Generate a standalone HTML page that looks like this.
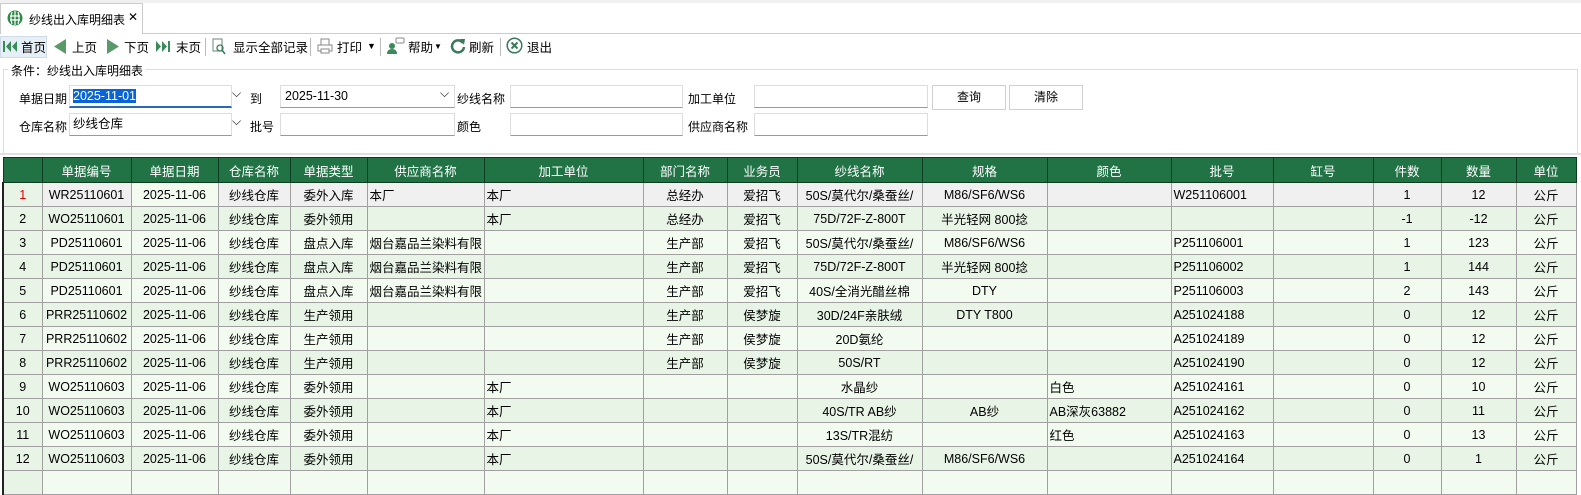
<!DOCTYPE html>
<html><head><meta charset="utf-8"><style>
*{box-sizing:border-box;margin:0;padding:0}
body{width:1581px;height:473px;overflow:hidden;background:#fff;font-family:"Liberation Sans","Noto Sans CJK SC",sans-serif;font-size:12px;color:#000;position:relative}
.a{position:absolute}
.tab{left:0;top:3px;width:143px;height:31px;border:1px solid #ccc;border-bottom:none;background:#fff}
.tb span{position:absolute;top:37px;font-size:12.5px}
.inp{position:absolute;height:23px;border:1px solid #ddd;border-bottom:1px solid #999;background:#fff;font-size:12.5px;line-height:21px;padding-left:3px}
.lbl{position:absolute;font-size:12px}
.btn{position:absolute;height:25px;border:1px solid #d0d0d0;background:#fff;text-align:center;line-height:23px;font-size:12px}
table{position:absolute;left:2px;top:157px;width:1573px;border-collapse:collapse;table-layout:fixed}
td,th{border:1px solid #a0a0a0;height:24px;font-size:12.5px;white-space:nowrap;overflow:hidden;padding:0 2px;text-align:center;font-weight:normal}
th{background:#217346;color:#fff;border-color:#0d3d20;height:25px}
tr.r1 td{background:#f0f0f0}
tr.o td{background:#f3fbf1}
tr.e td{background:#e8f5e6}
td.n{background:#e8f5e6!important;border-left:2px solid #222}
td.l{text-align:left}
</style></head><body>
<div class="a" style="left:0;top:0;width:1581px;height:3px;background:#f0f0f0"></div>
<div class="a" style="left:0;top:33px;width:1581px;height:1px;background:#ccc"></div>
<div class="a tab"></div>
<svg class="a" style="left:7px;top:10px" width="16" height="16"><circle cx="8" cy="8" r="7.5" fill="#2f8a4a"/><path d="M3 6h10M3 10h10M8 1v14M5 2q-2 6 0 12M11 2q2 6 0 12" stroke="#fff" stroke-width="1.2" fill="none"/></svg>
<div class="a" style="left:29px;top:11px;font-size:12px">纱线出入库明细表</div>
<div class="a" style="left:128px;top:10px;font-size:12px">✕</div>
<div class="tb">
<div class="a" style="left:0;top:36px;width:47px;height:22px;background:#e6eef6;border:1px solid #cfdbe8"></div>
<svg class="a" style="left:3px;top:40px" width="14" height="13"><rect x="0" y="1" width="2" height="11" fill="#3a8a5a"/><path d="M8 1L3 6.5 8 12zM14 1L9 6.5 14 12z" fill="#3a8a5a"/></svg><span style="left:21px">首页</span>
<svg class="a" style="left:53px;top:39px" width="14" height="15"><path d="M13 0L1 7.5 13 15z" fill="#5a9a6a"/></svg><span style="left:72px">上页</span>
<svg class="a" style="left:106px;top:39px" width="14" height="15"><path d="M1 0L13 7.5 1 15z" fill="#5a9a6a"/></svg><span style="left:124px">下页</span>
<svg class="a" style="left:156px;top:40px" width="14" height="13"><path d="M0 1L5 6.5 0 12zM6 1L11 6.5 6 12z" fill="#3a8a5a"/><rect x="12" y="1" width="2" height="11" fill="#3a8a5a"/></svg><span style="left:176px">末页</span>
<div class="a" style="left:205px;top:38px;width:1px;height:18px;background:#bbb"></div>
<svg class="a" style="left:212px;top:38px" width="14" height="17"><rect x="1" y="1" width="9" height="12" fill="none" stroke="#6a8a7a"/><circle cx="8" cy="10" r="3" fill="none" stroke="#3a7a5a" stroke-width="1.3"/><path d="M10 12l3 4" stroke="#3a7a5a" stroke-width="1.5"/></svg><span style="left:233px">显示全部记录</span>
<div class="a" style="left:310px;top:38px;width:1px;height:18px;background:#bbb"></div>
<svg class="a" style="left:317px;top:38px" width="16" height="16"><rect x="4" y="1" width="8" height="6" fill="none" stroke="#888"/><rect x="1" y="7" width="14" height="6" fill="none" stroke="#888"/><rect x="4" y="11" width="8" height="4" fill="#fff" stroke="#888"/></svg><span style="left:337px">打印</span><span style="left:367px;font-size:9px;top:41px">▼</span>
<div class="a" style="left:380px;top:38px;width:1px;height:18px;background:#bbb"></div>
<svg class="a" style="left:387px;top:37px" width="18" height="17"><circle cx="5" cy="9" r="3" fill="#3a8a5a"/><path d="M0 17q0-5 5-5t5 5z" fill="#3a8a5a"/><rect x="9" y="1" width="8" height="5" rx="1" fill="none" stroke="#888"/></svg><span style="left:408px">帮助</span><span style="left:434px;font-size:8px;top:42px">▼</span>
<svg class="a" style="left:450px;top:38px" width="16" height="16"><path d="M13 5A6 6 0 1 0 14 9" fill="none" stroke="#3a7a5a" stroke-width="2.5"/><path d="M10 1l5 0-1 6z" fill="#3a7a5a"/></svg><span style="left:469px">刷新</span>
<div class="a" style="left:500px;top:38px;width:1px;height:18px;background:#bbb"></div>
<svg class="a" style="left:506px;top:37px" width="17" height="17"><circle cx="8.5" cy="8.5" r="7.3" fill="none" stroke="#3a7a5a" stroke-width="1.5"/><path d="M5.5 5.5l6 6M11.5 5.5l-6 6" stroke="#3a7a5a" stroke-width="2"/></svg><span style="left:527px">退出</span>
</div>
<div class="a" style="left:3px;top:69px;width:1575px;height:86px;border:1px solid #ddd;border-bottom:none"></div>
<div class="a" style="left:8px;top:62px;padding:0 3px;background:#fff">条件：纱线出入库明细表</div>
<div class="lbl" style="left:19px;top:90px">单据日期</div>
<div class="inp" style="left:69px;top:85px;width:163px;border-bottom:2px solid #2a6ab0"><span style="background:#0a64d6;color:#fff">2025-11-01</span></div>
<div class="a" style="left:232px;top:86px">⌵</div>
<div class="lbl" style="left:250px;top:90px">到</div>
<div class="inp" style="left:280px;top:85px;width:175px;padding-left:4px">2025-11-30</div>
<div class="a" style="left:440px;top:86px">⌵</div>
<div class="lbl" style="left:457px;top:90px">纱线名称</div>
<div class="inp" style="left:510px;top:85px;width:173px"></div>
<div class="lbl" style="left:688px;top:90px">加工单位</div>
<div class="inp" style="left:754px;top:85px;width:174px"></div>
<div class="btn" style="left:932px;top:85px;width:74px">查询</div>
<div class="btn" style="left:1009px;top:85px;width:74px">清除</div>
<div class="lbl" style="left:19px;top:118px">仓库名称</div>
<div class="inp" style="left:69px;top:113px;width:163px">纱线仓库</div>
<div class="a" style="left:232px;top:114px">⌵</div>
<div class="lbl" style="left:250px;top:118px">批号</div>
<div class="inp" style="left:280px;top:113px;width:175px"></div>
<div class="lbl" style="left:457px;top:118px">颜色</div>
<div class="inp" style="left:510px;top:113px;width:173px"></div>
<div class="lbl" style="left:688px;top:118px">供应商名称</div>
<div class="inp" style="left:754px;top:113px;width:174px"></div>
<div class="a" style="left:0;top:153px;width:1581px;height:2px;background:#e0e0e0"></div>
<table>
<colgroup><col style="width:39px"><col style="width:89px"><col style="width:87px"><col style="width:72px"><col style="width:77px"><col style="width:117px"><col style="width:159px"><col style="width:84px"><col style="width:70px"><col style="width:125px"><col style="width:125px"><col style="width:124px"><col style="width:102px"><col style="width:100px"><col style="width:68px"><col style="width:75px"><col style="width:60px"></colgroup>
<tr><th></th><th>单据编号</th><th>单据日期</th><th>仓库名称</th><th>单据类型</th><th>供应商名称</th><th>加工单位</th><th>部门名称</th><th>业务员</th><th>纱线名称</th><th>规格</th><th>颜色</th><th>批号</th><th>缸号</th><th>件数</th><th>数量</th><th>单位</th></tr>
<tr class="r1"><td class="n" style="color:#d00">1</td><td>WR25110601</td><td style="background:#f3fbf1">2025-11-06</td><td>纱线仓库</td><td>委外入库</td><td class="l">本厂</td><td class="l">本厂</td><td>总经办</td><td>爱招飞</td><td>50S/莫代尔/桑蚕丝/</td><td>M86/SF6/WS6</td><td></td><td class="l">W251106001</td><td></td><td>1</td><td>12</td><td>公斤</td></tr>
<tr class="e"><td class="n">2</td><td>WO25110601</td><td>2025-11-06</td><td>纱线仓库</td><td>委外领用</td><td class="l"></td><td class="l">本厂</td><td>总经办</td><td>爱招飞</td><td>75D/72F-Z-800T</td><td>半光轻网 800捻</td><td></td><td class="l"></td><td></td><td>-1</td><td>-12</td><td>公斤</td></tr>
<tr class="o"><td class="n">3</td><td>PD25110601</td><td>2025-11-06</td><td>纱线仓库</td><td>盘点入库</td><td class="l">烟台嘉品兰染料有限</td><td class="l"></td><td>生产部</td><td>爱招飞</td><td>50S/莫代尔/桑蚕丝/</td><td>M86/SF6/WS6</td><td></td><td class="l">P251106001</td><td></td><td>1</td><td>123</td><td>公斤</td></tr>
<tr class="e"><td class="n">4</td><td>PD25110601</td><td>2025-11-06</td><td>纱线仓库</td><td>盘点入库</td><td class="l">烟台嘉品兰染料有限</td><td class="l"></td><td>生产部</td><td>爱招飞</td><td>75D/72F-Z-800T</td><td>半光轻网 800捻</td><td></td><td class="l">P251106002</td><td></td><td>1</td><td>144</td><td>公斤</td></tr>
<tr class="o"><td class="n">5</td><td>PD25110601</td><td>2025-11-06</td><td>纱线仓库</td><td>盘点入库</td><td class="l">烟台嘉品兰染料有限</td><td class="l"></td><td>生产部</td><td>爱招飞</td><td>40S/全消光醋丝棉</td><td>DTY</td><td></td><td class="l">P251106003</td><td></td><td>2</td><td>143</td><td>公斤</td></tr>
<tr class="e"><td class="n">6</td><td>PRR25110602</td><td>2025-11-06</td><td>纱线仓库</td><td>生产领用</td><td class="l"></td><td class="l"></td><td>生产部</td><td>侯梦旋</td><td>30D/24F亲肤绒</td><td>DTY T800</td><td></td><td class="l">A251024188</td><td></td><td>0</td><td>12</td><td>公斤</td></tr>
<tr class="o"><td class="n">7</td><td>PRR25110602</td><td>2025-11-06</td><td>纱线仓库</td><td>生产领用</td><td class="l"></td><td class="l"></td><td>生产部</td><td>侯梦旋</td><td>20D氨纶</td><td></td><td></td><td class="l">A251024189</td><td></td><td>0</td><td>12</td><td>公斤</td></tr>
<tr class="e"><td class="n">8</td><td>PRR25110602</td><td>2025-11-06</td><td>纱线仓库</td><td>生产领用</td><td class="l"></td><td class="l"></td><td>生产部</td><td>侯梦旋</td><td>50S/RT</td><td></td><td></td><td class="l">A251024190</td><td></td><td>0</td><td>12</td><td>公斤</td></tr>
<tr class="o"><td class="n">9</td><td>WO25110603</td><td>2025-11-06</td><td>纱线仓库</td><td>委外领用</td><td class="l"></td><td class="l">本厂</td><td></td><td></td><td>水晶纱</td><td></td><td class="l">白色</td><td class="l">A251024161</td><td></td><td>0</td><td>10</td><td>公斤</td></tr>
<tr class="e"><td class="n">10</td><td>WO25110603</td><td>2025-11-06</td><td>纱线仓库</td><td>委外领用</td><td class="l"></td><td class="l">本厂</td><td></td><td></td><td>40S/TR AB纱</td><td>AB纱</td><td class="l">AB深灰63882</td><td class="l">A251024162</td><td></td><td>0</td><td>11</td><td>公斤</td></tr>
<tr class="o"><td class="n">11</td><td>WO25110603</td><td>2025-11-06</td><td>纱线仓库</td><td>委外领用</td><td class="l"></td><td class="l">本厂</td><td></td><td></td><td>13S/TR混纺</td><td></td><td class="l">红色</td><td class="l">A251024163</td><td></td><td>0</td><td>13</td><td>公斤</td></tr>
<tr class="e"><td class="n">12</td><td>WO25110603</td><td>2025-11-06</td><td>纱线仓库</td><td>委外领用</td><td class="l"></td><td class="l">本厂</td><td></td><td></td><td>50S/莫代尔/桑蚕丝/</td><td>M86/SF6/WS6</td><td></td><td class="l">A251024164</td><td></td><td>0</td><td>1</td><td>公斤</td></tr>
<tr class="o"><td class="n"></td><td></td><td></td><td></td><td></td><td></td><td></td><td></td><td></td><td></td><td></td><td></td><td></td><td></td><td></td><td></td><td></td></tr>
</table>
</body></html>
